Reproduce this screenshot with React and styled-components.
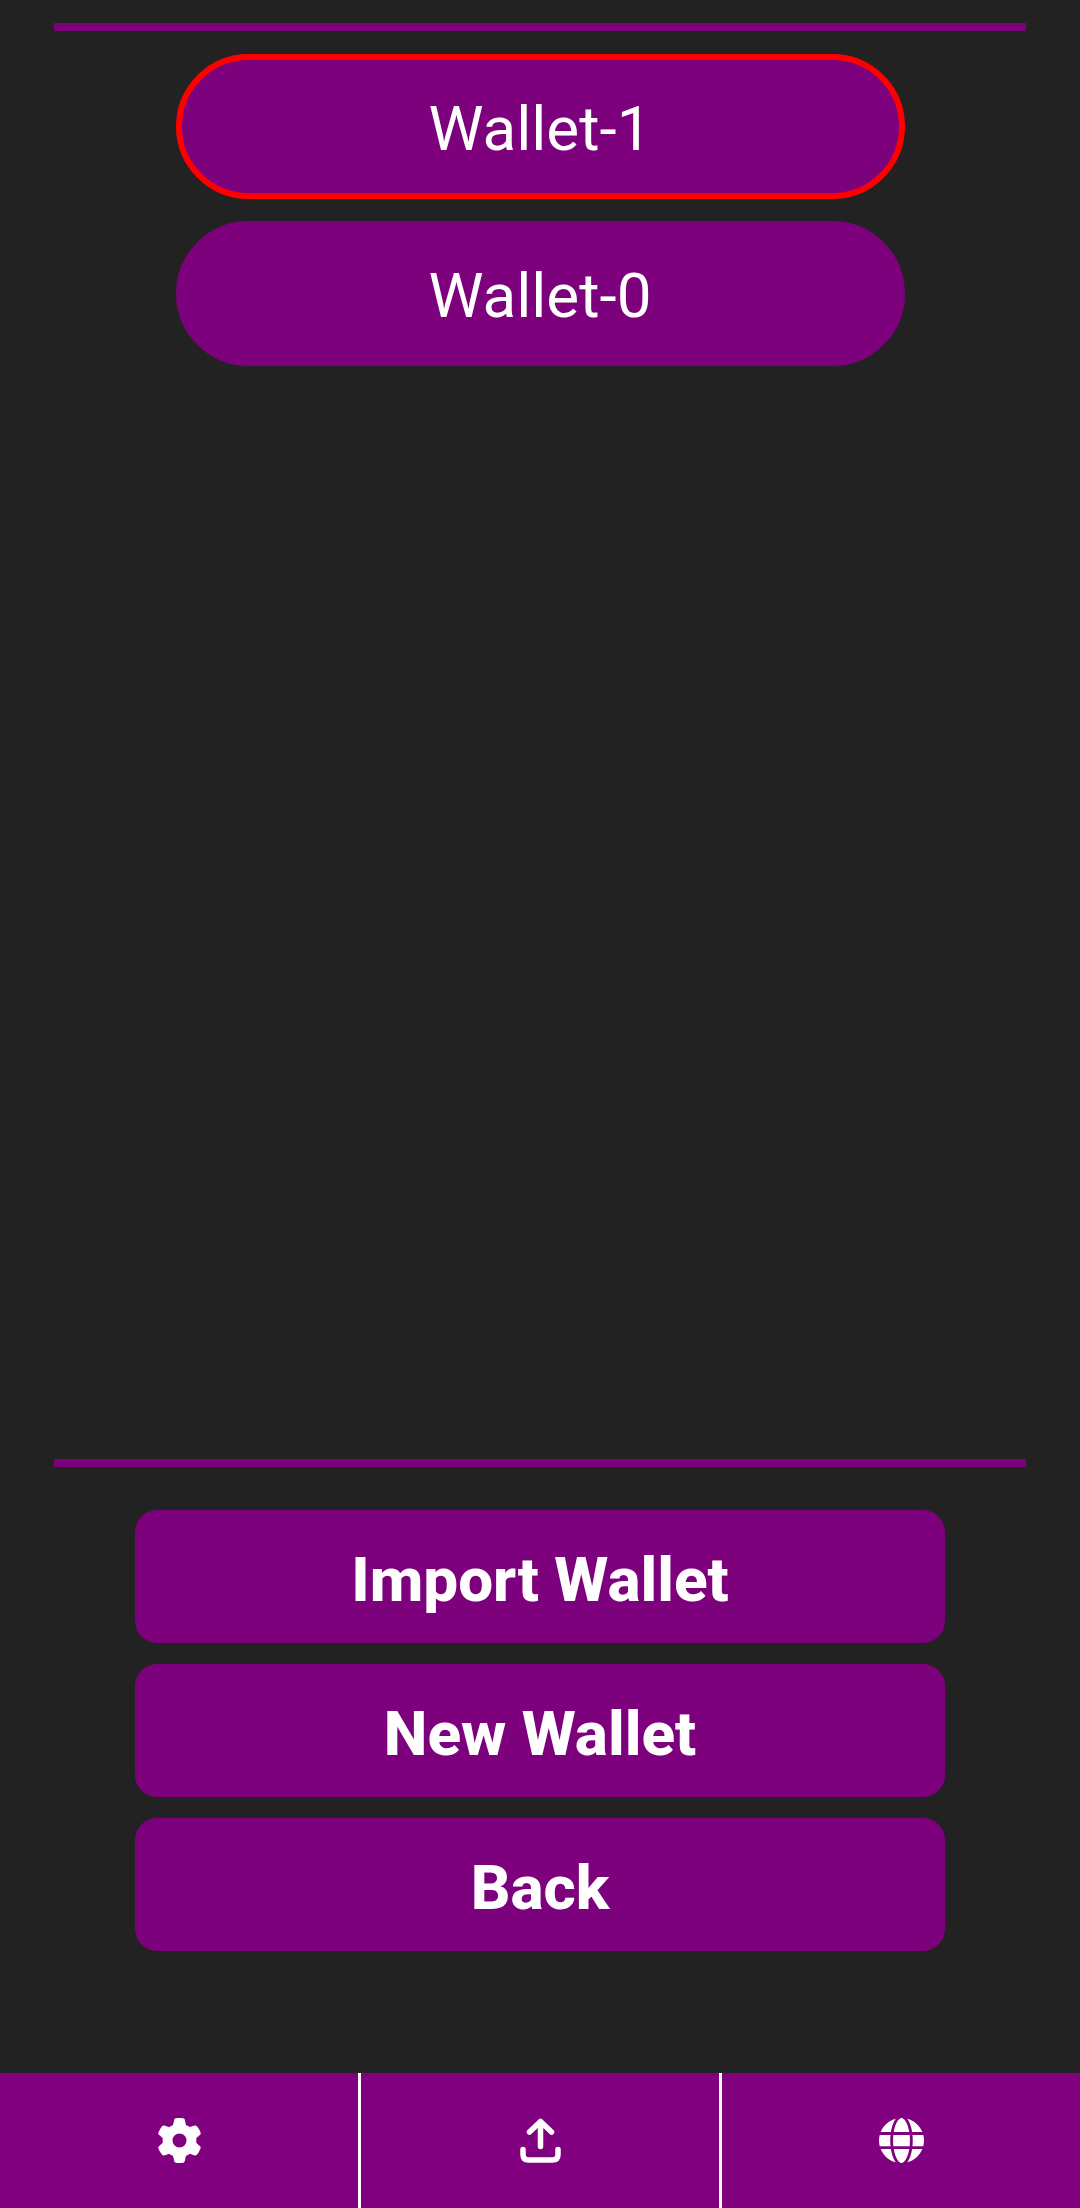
import React from "react";
import styled, { createGlobalStyle } from "styled-components";
import { FaGear, FaGlobe } from "react-icons/fa6";

const GlobalStyle = createGlobalStyle`
  * { box-sizing: border-box; }
  body { margin: 0; background: #222222; font-family: Roboto, "Noto Sans", sans-serif; }
`;

const Screen = styled.div`
  min-height: 100vh;
  display: flex;
  flex-direction: column;
  padding-top: 23px;
  color: #ffffff;
`;

const WalletList = styled.main`
  flex: 1;
  width: 90%;
  margin: 0 auto;
  padding-top: 23px;
  display: flex;
  flex-direction: column;
  align-items: center;
  gap: 22px;
  border-top: 8px solid #7d007d;
  border-bottom: 8px solid #7d007d;
`;

const Button = styled.button`
  padding: 0;
  border: 0;
  background: #7d007d;
  color: inherit;
  font-family: inherit;
  font-size: 62px;
  line-height: 74px;
  cursor: pointer;
`;

const WalletButton = styled(Button)`
  width: 75%;
  height: 145px;
  padding-top: 4px;
  border: 6px solid ${(p) => (p.$selected ? "#ff0000" : "#7d007d")};
  border-radius: 73px;
`;

const Actions = styled.section`
  width: 75%;
  margin: 0 auto;
  padding: 43px 0 122px;
  display: flex;
  flex-direction: column;
  gap: 21px;
`;

const ActionButton = styled(Button)`
  height: 133px;
  padding-top: 6px;
  border-radius: 22px;
  font-weight: 800;
`;

const TabBar = styled.nav`
  height: 135px;
  display: flex;
`;

const Tab = styled(Button)`
  flex: 1;
  display: flex;
  align-items: center;
  justify-content: center;
  background: #800080;
  & + & { border-left: 3px solid #ffffff; }
  svg { display: block; }
`;

const UploadIcon = () => (
  <svg width="48" height="48" viewBox="0 0 48 48" fill="none" stroke="currentColor" strokeWidth="5.5" strokeLinecap="round" strokeLinejoin="round" aria-hidden="true">
    <path d="M24.5 29.5V4.5M13.5 15L24.5 4.5L35.5 15M7 32.5V37.5Q7 43 12.5 43H36.5Q42 43 42 37.5V32.5" />
  </svg>
);

export default function App() {
  return (
    <>
      <GlobalStyle />
      <Screen>
        <WalletList>
          <WalletButton $selected aria-pressed="true">Wallet-1</WalletButton>
          <WalletButton aria-pressed="false">Wallet-0</WalletButton>
        </WalletList>
        <Actions>
          <ActionButton>Import Wallet</ActionButton>
          <ActionButton>New Wallet</ActionButton>
          <ActionButton>Back</ActionButton>
        </Actions>
        <TabBar>
          <Tab aria-label="Settings"><FaGear size={45} /></Tab>
          <Tab aria-label="Send"><UploadIcon /></Tab>
          <Tab aria-label="Network"><FaGlobe size={45} /></Tab>
        </TabBar>
      </Screen>
    </>
  );
}
